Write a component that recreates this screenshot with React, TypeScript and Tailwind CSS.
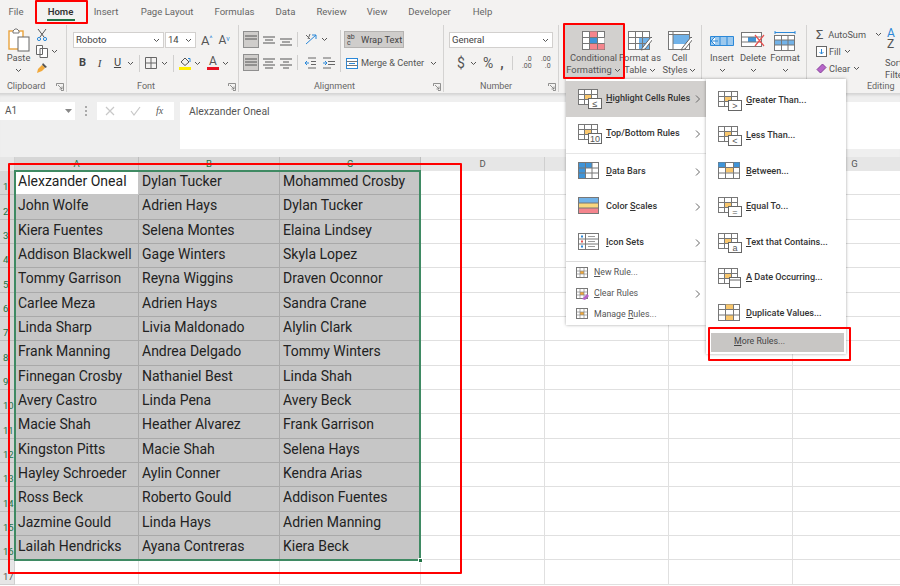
import React from "react";

const ui = { fontFamily: 'Roboto, sans-serif' };
const roboto = { fontFamily: 'Roboto, sans-serif' };

const Chev = ({ className = "" }: { className?: string }) => (
  <svg width="7" height="5" viewBox="0 0 7 5" className={"shrink-0 " + className}><path d="M1 1l2.5 2.5L6 1" fill="none" stroke="#555" strokeWidth="1" /></svg>
);
const Launcher = () => (
  <svg width="8" height="8" viewBox="0 0 8 8"><path d="M.5 3V.5H7.5V7.5H5M2 2l4 4M6 3.5V6H3.5" fill="none" stroke="#777" strokeWidth=".8" /></svg>
);
const Sep = ({ h = "h-[20px]" }: { h?: string }) => <div className={"w-px bg-[#d0cfce] shrink-0 " + h} />;

const Group = ({ w, label, lx, launcher = true, children }: { w: string; label: string; lx: string; launcher?: boolean; children: React.ReactNode }) => (
  <div className={"flex flex-col shrink-0 h-[67px] border-r border-[#d4d3d2] " + w}>
    <div className="h-[56px] flex">{children}</div>
    <div className="h-[11px] flex items-center justify-between">
      <span className={"text-[9px] text-[#666] leading-none whitespace-nowrap " + lx}>{label}</span>
      {launcher && <span className="mr-[2px] flex"><Launcher /></span>}
    </div>
  </div>
);

const Select = ({ w, text }: { w: string; text: string }) => (
  <div className={"h-[16px] bg-white border border-[#d2d0ce] flex items-center justify-between pl-[2px] pr-[3px] shrink-0 " + w}>
    <span className="text-[9.5px] text-[#444] leading-none">{text}</span>
    <Chev />
  </div>
);

const AlignIcon = ({ rows, on }: { rows: [number, number][]; on?: boolean }) => (
  <div className={"w-[16px] h-[17px] flex items-center justify-center " + (on ? "bg-[#cfcdcb] border border-[#8f8f8f]" : "")}>
    <svg width="12" height="12" viewBox="0 0 12 12">
      {rows.map(([y, x], i) => <path key={i} d={`M${x} ${y}H${12 - x}`} stroke="#555" strokeWidth="1" />)}
    </svg>
  </div>
);

const BigTable = ({ children }: { children?: React.ReactNode }) => (
  <svg width="24" height="21" viewBox="0 0 24 21">
    <rect x=".5" y=".5" width="22" height="18" fill="#fff" stroke="#777" />
    {children}
    <path d="M.5 6.5H22.5M.5 12.5H22.5M7.5 .5V18.5M15.5 .5V18.5" stroke="#777" fill="none" />
  </svg>
);

const Big = ({ icon, l1, l2, w, chev2 = true, ml = "" }: { icon: React.ReactNode; l1: string; l2: string; w: string; chev2?: boolean; ml?: string }) => (
  <div className={"flex flex-col items-center pt-[5px] shrink-0 " + w + " " + ml}>
    <div className="h-[22px] flex items-center">{icon}</div>
    <div className="text-[9.3px] leading-[12px] text-[#555] text-center whitespace-nowrap">{l1}</div>
    {l2 ? (
      <div className="text-[9.3px] leading-[12px] text-[#555] flex items-center gap-[2px] whitespace-nowrap">{l2}{chev2 && <Chev />}</div>
    ) : (
      <div className="h-[12px] flex items-center"><Chev /></div>
    )}
  </div>
);

const Tabs = () => {
  const tabs: [string, number, number][] = [
    ["File", 14, 9], ["Home", 27, 24], ["Insert", 24, 20], ["Page Layout", 52, 23], ["Formulas", 39, 22],
    ["Data", 19, 22], ["Review", 29, 22], ["View", 20, 21], ["Developer", 45, 20], ["Help", 19, 21],
  ];
  return (
    <div className="h-[25px] flex items-start">
      {tabs.map(([t, w, m]) => (
        <div key={t} className="h-[25px] flex flex-col items-center shrink-0" style={{ width: w, marginLeft: m }}>
          <div className={"mt-[5px] text-[9.6px] leading-[14px] whitespace-nowrap " + (t === "Home" ? "font-semibold text-[#333]" : "text-[#666]")}>{t}</div>
          {t === "Home" && <div className="w-[28px] h-[2px] bg-[#217346]" />}
        </div>
      ))}
    </div>
  );
};

const Ribbon = () => (
  <div className="h-[68px] flex">
    {/* Clipboard */}
    <Group w="w-[67px]" label="Clipboard" lx="ml-[7px]">
      <div className="w-[36px] flex flex-col items-center pl-[1px] pt-[3px]">
        <svg width="22" height="24" viewBox="0 0 22 24">
          <rect x="1" y="3" width="14" height="18" fill="#fff" stroke="#e8a33d" strokeWidth="1.4" />
          <path d="M5 3l2-2h2l2 2v2H5z" fill="#fff" stroke="#777" />
          <rect x="10" y="9" width="11" height="14" fill="#fff" stroke="#666" />
        </svg>
        <div className="text-[9.3px] leading-[12px] text-[#555]">Paste</div>
        <Chev className="mt-[4px]" />
      </div>
      <div className="flex flex-col pt-[3px] gap-[4px]">
        <svg width="12" height="13" viewBox="0 0 12 13"><path d="M2 1l6 8M10 1L4 9" stroke="#555" fill="none" /><circle cx="3" cy="11" r="1.6" fill="none" stroke="#2b88d8" /><circle cx="9" cy="11" r="1.6" fill="none" stroke="#2b88d8" /></svg>
        <div className="flex items-center gap-[3px]">
          <svg width="12" height="13" viewBox="0 0 12 13"><path d="M.5.5h6v9h-6zM4 3.5h7.5v9H4z" fill="#fff" stroke="#666" /></svg>
          <Chev />
        </div>
        <svg width="12" height="13" viewBox="0 0 12 13"><path d="M7 1l4 4-2 1-3-3z" fill="#555" /><path d="M6 3l3 3-3 3-5 2 1-4z" fill="#f2a93b" /></svg>
      </div>
    </Group>
    {/* Font */}
    <Group w="w-[172px]" label="Font" lx="ml-[70px]">
      <div className="flex flex-col pl-[6px]">
        <div className="flex items-center mt-[7px]">
          <Select w="w-[91px]" text="Roboto" />
          <Select w="w-[31px] ml-[1px]" text="14" />
          <span className="ml-[5px] text-[13px] leading-none text-[#555]">A<sup className="text-[7px] text-[#2b88d8]">^</sup></span>
          <span className="ml-[6px] text-[12px] leading-none text-[#555]">A<sup className="text-[7px] text-[#2b88d8]">v</sup></span>
        </div>
        <div className="flex items-center mt-[7px] h-[16px] text-[11px] text-[#444]">
          <b className="ml-[5px] w-[9px] text-center">B</b>
          <i className="ml-[8px] w-[9px] text-center" style={{ fontFamily: "serif" }}>I</i>
          <u className="ml-[9px] w-[9px] text-center">U</u>
          <Chev className="ml-[5px]" />
          <Sep h="h-[17px] ml-[5px]" />
          <svg className="ml-[5px]" width="12" height="12" viewBox="0 0 12 12"><path d="M.5.5h11v11H.5zM6 .5v11M.5 6h11" fill="none" stroke="#666" /></svg>
          <Chev className="ml-[4px]" />
          <Sep h="h-[17px] ml-[5px]" />
          <svg className="ml-[5px]" width="12" height="14" viewBox="0 0 12 14"><path d="M2 6l4-4 4 4-4 3.5z" fill="none" stroke="#555" /><path d="M9 2.5h2V6" stroke="#2b88d8" fill="none" /><rect x="0" y="11" width="12" height="3" fill="#ffee00" /></svg>
          <Chev className="ml-[3px]" />
          <div className="ml-[6px] w-[12px] flex flex-col items-center">
            <span className="text-[12px] leading-[11px] text-[#555]">A</span>
            <div className="w-[12px] h-[3px] bg-[#e81123]" />
          </div>
          <Chev className="ml-[3px]" />
        </div>
      </div>
    </Group>
    {/* Alignment */}
    <Group w="w-[205px]" label="Alignment" lx="ml-[75px]">
      <div className="flex flex-col pl-[4px] pt-[6px] gap-[6px]">
        <div className="flex items-center gap-px">
          <AlignIcon on rows={[[2, 0], [5, 0], [8, 6]]} />
          <div className="ml-[1px]"><AlignIcon rows={[[3, 0], [6, 2], [9, 0]]} /></div>
          <AlignIcon rows={[[5, 0], [8, 2], [11, 0]]} />
          <Sep h="h-[15px] ml-[2px]" />
          <svg className="ml-[5px]" width="14" height="13" viewBox="0 0 14 13"><path d="M2 11L12 2M8 2h4v4" stroke="#2b88d8" fill="none" /><path d="M2 2l4 4M6 1l-2 5" stroke="#666" fill="none" /></svg>
          <Chev className="ml-[2px]" />
        </div>
        <div className="flex items-center gap-px">
          <AlignIcon on rows={[[2, 0], [5, 0], [8, 0], [11, 6]]} />
          <div className="ml-[1px]"><AlignIcon rows={[[2, 0], [5, 2], [8, 0], [11, 2]]} /></div>
          <AlignIcon rows={[[2, 0], [5, 3], [8, 0], [11, 3]]} />
          <Sep h="h-[15px] ml-[2px]" />
          <svg className="ml-[5px]" width="12" height="12" viewBox="0 0 12 12"><path d="M4 1h8M7 4.5h5M7 7.5h5M4 11h8" stroke="#666" /><path d="M5 6H1M3 4L1 6l2 2" stroke="#2b88d8" fill="none" /></svg>
          <svg className="ml-[6px]" width="12" height="12" viewBox="0 0 12 12"><path d="M0 1h8M5 4.5h7M5 7.5h7M0 11h8" stroke="#666" /><path d="M0 6h4M2 4l2 2-2 2" stroke="#2b88d8" fill="none" /></svg>
        </div>
      </div>
      <div className="ml-[5px] mt-[5px] h-[42px]"><Sep h="h-[42px]" /></div>
      <div className="flex flex-col pl-[3px] pt-[6px]">
        <div className="w-[60px] h-[17px] bg-[#cfcdcb] border border-[#b5b3b1] flex items-center pl-[2px] gap-[2px]">
          <span className="text-[7px] leading-[6px] text-[#444] w-[12px]">ab<br />c</span>
          <span className="text-[9.3px] leading-none text-[#444] whitespace-nowrap">Wrap Text</span>
        </div>
        <div className="mt-[7px] flex items-center pl-[2px] h-[16px]">
          <svg width="12" height="11" viewBox="0 0 12 11"><rect x=".5" y=".5" width="11" height="10" fill="#fff" stroke="#2b88d8" /><path d="M.5 3.5h11M.5 7.5h11" stroke="#777" /><path d="M3 5.5h6" stroke="#2b88d8" /></svg>
          <span className="ml-[3px] text-[9.2px] leading-none text-[#555] whitespace-nowrap">Merge &amp; Center</span>
          <Chev className="ml-[6px]" />
        </div>
      </div>
    </Group>
    {/* Number */}
    <Group w="w-[115px]" label="Number" lx="ml-[36px]">
      <div className="flex flex-col pl-[5px]">
        <div className="mt-[7px]"><Select w="w-[104px]" text="General" /></div>
        <div className="flex items-center mt-[7px] h-[16px] text-[#555]">
          <span className="ml-[8px] text-[14px] leading-none">$</span>
          <Chev className="ml-[5px]" />
          <span className="ml-[6px] text-[14px] leading-none">%</span>
          <b className="ml-[7px] text-[14px] leading-none">,</b>
          <Sep h="h-[14px] ml-[8px]" />
          <span className="ml-[5px] text-[7px] leading-[7px] w-[14px] text-right">.0<br />.00</span>
          <span className="ml-[5px] text-[7px] leading-[7px] w-[14px] text-right">.00<br />.0</span>
        </div>
      </div>
    </Group>
    {/* Styles */}
    <Group w="w-[143px]" label="" lx="" launcher={false}>
      <div className="w-[59px] ml-[5px] h-[53px] bg-[#d2d0ce]">
        <Big w="w-[59px]" l1="Conditional" l2="Formatting" icon={
          <BigTable>
            <rect x="7.5" y=".5" width="8" height="6" fill="#f4858d" /><rect x="15.5" y="6.5" width="7" height="6" fill="#fff" /><rect x="7.5" y="6.5" width="8" height="6" fill="#3f94d8" /><rect x="7.5" y="12.5" width="15" height="6" fill="#f4858d" />
          </BigTable>
        } />
      </div>
      <Big w="w-[34px]" l1="Format as" l2="Table" icon={
        <svg width="24" height="21" viewBox="0 0 24 21"><rect x=".5" y=".5" width="21" height="18" fill="#fff" stroke="#777" /><rect x="11" y="7" width="10" height="11" fill="#71b2e8" /><path d="M.5 6.5h21M.5 12.5h21M7.5.5v18M14.5.5v18" stroke="#777" /><path d="M23 6l-8 10-2 3 4-1 8-10z" fill="#fff" stroke="#666" /></svg>
      } />
      <Big w="w-[45px]" l1="Cell" l2="Styles" icon={
        <svg width="24" height="21" viewBox="0 0 24 21"><rect x=".5" y=".5" width="21" height="18" fill="#fff" stroke="#777" /><rect x="5" y="3" width="16" height="10" fill="#71b2e8" /><path d="M.5 3.5h21M5 .5v18" stroke="#777" /><path d="M23 6l-8 10-2 3 4-1 8-10z" fill="#fff" stroke="#666" /></svg>
      } />
    </Group>
    {/* Cells */}
    <Group w="w-[105px]" label="" lx="" launcher={false}>
      <Big w="w-[34px]" ml="ml-[3px]" l1="Insert" l2="" icon={
        <svg width="24" height="16" viewBox="0 0 24 16"><path d="M.5 3.5h23v9H.5z" fill="#9cc9ee" stroke="#2b88d8" /><path d="M8 8H2M5 4L1 8l4 4" fill="#fff" stroke="#2b88d8" /><path d="M10 3.5v9M17 3.5v9" stroke="#2b88d8" /></svg>
      } />
      <Big w="w-[28px]" l1="Delete" l2="" icon={
        <svg width="24" height="18" viewBox="0 0 24 18"><rect x=".5" y=".5" width="20" height="14" fill="#fff" stroke="#777" /><rect x="7" y="5" width="8" height="5" fill="#3f94d8" /><path d="M.5 5h20M.5 10h20" stroke="#777" /><path d="M14 3l9 11M23 3l-9 11" stroke="#e8504f" strokeWidth="1.2" /></svg>
      } />
      <Big w="w-[36px]" l1="Format" l2="" icon={
        <svg width="22" height="21" viewBox="0 0 22 21"><path d="M1 1.5h20M1 0v3M21 0v3" stroke="#2b88d8" /><rect x=".5" y="4.5" width="20" height="15" fill="#fff" stroke="#777" /><rect x="1" y="9" width="19" height="5" fill="#71b2e8" /><path d="M7.5 4.5v15M14 4.5v15M.5 9h20M.5 14h20" stroke="#777" /></svg>
      } />
    </Group>
    {/* Editing */}
    <div className="flex flex-col flex-1 min-w-0 h-[67px] overflow-hidden">
      <div className="h-[56px] flex">
        <div className="w-[75px] pl-[9px] pt-[1px] shrink-0 text-[9.2px] leading-none text-[#555]">
          <div className="flex items-center h-[17px] whitespace-nowrap">
            <span className="w-[13px] text-[13px]">Σ</span><span>AutoSum</span><Chev className="ml-[9px]" />
          </div>
          <div className="flex items-center h-[17px] whitespace-nowrap">
            <svg className="mr-[2px]" width="11" height="11" viewBox="0 0 11 11"><rect x=".5" y=".5" width="10" height="10" fill="#fff" stroke="#666" /><path d="M5.5 3v5M3.5 6l2 2 2-2" stroke="#2b88d8" fill="none" /></svg>
            <span>Fill</span><Chev className="ml-[3px]" />
          </div>
          <div className="flex items-center h-[17px] whitespace-nowrap">
            <svg className="mr-[2px]" width="11" height="11" viewBox="0 0 11 11"><path d="M1 6.5L6.5 1 10 4.5 4.5 10z" fill="#b665c8" stroke="#86409a" /></svg>
            <span>Clear</span><Chev className="ml-[3px]" />
          </div>
        </div>
        <div className="flex flex-col items-start ml-[3px] pt-[3px] text-[#555] whitespace-nowrap">
          <span className="text-[12px] leading-[11px] text-[#2b88d8] ml-[2px]">A</span>
          <span className="text-[12px] leading-[11px] ml-[2px]">Z</span>
          <span className="text-[9.3px] leading-[12px] mt-[7px]">Sort &amp;</span>
          <span className="text-[9.3px] leading-[12px]">Filter</span>
        </div>
      </div>
      <div className="h-[11px] flex items-center"><span className="ml-[60px] text-[9px] text-[#666] leading-none">Editing</span></div>
    </div>
  </div>
);

const FormulaBar = () => (
  <div className="h-[64px] bg-[#efefef] pt-[9px] shadow-[inset_0_4px_3px_-2px_rgba(0,0,0,0.12)]">
    <div className="flex items-start">
      <div className="w-[75px] h-[18px] bg-white flex items-center justify-between pl-[5px] pr-[3px]">
        <span className="text-[10px] text-[#555] leading-none">A1</span>
        <svg width="7" height="4" viewBox="0 0 7 4"><path d="M0 0h7L3.5 4z" fill="#888" /></svg>
      </div>
      <span className="ml-[10px] w-[3px] h-[10px] mt-[4px] border-l-2 border-dotted border-[#aaa]" />
      <div className="ml-[9px] w-[77px] h-[18px] bg-white flex items-center pl-[8px] gap-[15px]">
        <svg width="10" height="10" viewBox="0 0 10 10"><path d="M1 1l8 8M9 1L1 9" stroke="#c8c8c8" strokeWidth="1.2" /></svg>
        <svg width="11" height="10" viewBox="0 0 11 10"><path d="M1 5l3 4 6-8" stroke="#c8c8c8" strokeWidth="1.2" fill="none" /></svg>
        <span className="text-[10px] italic leading-none text-[#555]" style={{ fontFamily: "serif" }}>fx</span>
      </div>
      <div className="ml-[6px] flex-1 h-[47px] bg-white pl-[9px] pt-[3px] text-[10.4px] leading-[14px] text-[#555]">Alexzander Oneal</div>
    </div>
  </div>
);

const cols = [124, 141, 141, 124, 124, 124, 124];
const colNames = ["A", "B", "C", "D", "E", "F", "G"];
const data = [
  ["Alexzander Oneal", "Dylan Tucker", "Mohammed Crosby"], ["John Wolfe", "Adrien Hays", "Dylan Tucker"],
  ["Kiera Fuentes", "Selena Montes", "Elaina Lindsey"], ["Addison Blackwell", "Gage Winters", "Skyla Lopez"],
  ["Tommy Garrison", "Reyna Wiggins", "Draven Oconnor"], ["Carlee Meza", "Adrien Hays", "Sandra Crane"],
  ["Linda Sharp", "Livia Maldonado", "Alylin Clark"], ["Frank Manning", "Andrea Delgado", "Tommy Winters"],
  ["Finnegan Crosby", "Nathaniel Best", "Linda Shah"], ["Avery Castro", "Linda Pena", "Avery Beck"],
  ["Macie Shah", "Heather Alvarez", "Frank Garrison"], ["Kingston Pitts", "Macie Shah", "Selena Hays"],
  ["Hayley Schroeder", "Aylin Conner", "Kendra Arias"], ["Ross Beck", "Roberto Gould", "Addison Fuentes"],
  ["Jazmine Gould", "Linda Hays", "Adrien Manning"], ["Lailah Hendricks", "Ayana Contreras", "Kiera Beck"],
  ["", "", ""],
];

const Sheet = () => (
  <div className="relative bg-white">
    <div className="flex h-[14px]">
      <div className="w-[15px] shrink-0 bg-[#e6e6e6] border-r border-[#d0d0d0]" />
      {cols.map((w, i) => (
        <div key={i} style={{ width: w }} className={"shrink-0 flex items-center justify-center text-[9.5px] leading-none border-r " + (i < 3 ? "bg-[#d6d6d6] text-[#217346] border-[#bdbdbd]" : "bg-[#e6e6e6] text-[#555] border-[#cfcfcf]")}>{colNames[i]}</div>
      ))}
    </div>
    {data.map((r, ri) => (
      <div key={ri} className="flex h-[24.33px]">
        <div className={"w-[15px] shrink-0 flex items-end justify-start pl-[3px] pb-[1px] text-[9.5px] leading-[12px] border-r border-b " + (ri < 16 ? "bg-[#d6d6d6] text-[#217346] border-[#bdbdbd]" : "bg-[#e6e6e6] text-[#555] border-[#cfcfcf]")}>{ri + 1}</div>
        {cols.map((w, ci) => {
          const sel = ci < 3 && ri < 16;
          const first = ci === 0 && ri === 0;
          return (
            <div key={ci} style={{ width: w, ...roboto }} className={"shrink-0 pl-[3px] border-r border-b text-[14px] leading-[20px] text-[#222] whitespace-nowrap overflow-hidden " + (first ? "bg-white border-[#c6c6c6]" : sel ? "bg-[#c6c6c6] border-[#a9a9a9]" : "bg-white border-[#e0e0e0]")}>
              {ci < 3 ? r[ci] : ""}
            </div>
          );
        })}
      </div>
    ))}
    {/* selection outline */}
    <div className="absolute left-[14px] top-[13px] w-[407px] h-[391px] border-2 border-[#3f8a63] pointer-events-none" />
    <div className="absolute left-[418px] top-[401px] w-[5px] h-[5px] bg-[#217346] border border-white pointer-events-none" />
  </div>
);

const Rule = ({ sym, kind = "box" }: { sym?: string; kind?: string }) => (
  <svg width="24" height="20" viewBox="0 0 24 20">
    <rect x=".5" y=".5" width="19" height="15" fill="#fff" stroke="#777" />
    <rect x="6.5" y="5.5" width="7" height="5" fill="#f9c76d" />
    <path d="M.5 5.5h19M.5 10.5h19M6.5.5v15M13.5.5v15" stroke="#777" />
    {kind === "box" && <><rect x="10.5" y="9.5" width="13" height="10" fill="#fff" stroke="#666" /><text x="17" y="17.5" textAnchor="middle" fontSize="9" fill="#555" fontFamily="Liberation Sans">{sym}</text></>}
    {kind === "date" && <><rect x="11.5" y="9.5" width="11" height="10" fill="#fff" stroke="#666" /><path d="M11.5 12h11" stroke="#666" /></>}
  </svg>
);

const RuleBars = ({ dup }: { dup?: boolean }) => (
  <svg width="24" height="20" viewBox="0 0 24 20">
    <rect x=".5" y=".5" width="21" height="16" fill="#fff" stroke="#777" />
    <rect x="7.5" y={dup ? ".5" : "5.5"} width="8" height="5" fill="#f9c76d" />
    {dup ? <rect x="7.5" y="11" width="8" height="5" fill="#f9c76d" /> : <><rect x=".5" y=".5" width="7" height="5" fill="#3f94d8" /><rect x="15.5" y=".5" width="6" height="5" fill="#3f94d8" /></>}
    <path d="M.5 5.5h21M.5 11h21M7.5.5v16M15.5.5v16" stroke="#777" />
  </svg>
);

const L = ({ u, t, pre = "" }: { u: string; t: string; pre?: string }) => <>{pre}<u>{u}</u>{t}</>;

const MainItem = ({ icon, label, on }: { icon: React.ReactNode; label: React.ReactNode; on?: boolean }) => (
  <div className={"h-[35.5px] flex items-center pl-[12px] pr-[6px] " + (on ? "bg-[#d2d0ce]" : "")}>
    <div className="w-[28px] flex shrink-0">{icon}</div>
    <span className="text-[9.1px] font-medium text-[#333] whitespace-nowrap flex-1">{label}</span>
    <svg width="5" height="8" viewBox="0 0 5 8"><path d="M1 .5L4.5 4 1 7.5" fill="none" stroke="#666" /></svg>
  </div>
);
const SmallItem = ({ icon, label, chev }: { icon: React.ReactNode; label: React.ReactNode; chev?: boolean }) => (
  <div className="h-[20.7px] flex items-center pl-[10px] pr-[6px]">
    <div className="w-[18px] flex shrink-0">{icon}</div>
    <span className="text-[8.8px] text-[#555] whitespace-nowrap flex-1">{label}</span>
    {chev && <svg width="5" height="8" viewBox="0 0 5 8"><path d="M1 .5L4.5 4 1 7.5" fill="none" stroke="#666" /></svg>}
  </div>
);
const SubItem = ({ icon, label }: { icon: React.ReactNode; label: React.ReactNode }) => (
  <div className="h-[35.5px] flex items-center pl-[12px]">
    <div className="w-[28px] flex shrink-0">{icon}</div>
    <span className="text-[9.1px] font-medium text-[#333] whitespace-nowrap">{label}</span>
  </div>
);
const Small = ({ variant }: { variant: number }) => (
  <svg width="13" height="12" viewBox="0 0 13 12">
    <rect x=".5" y=".5" width="11" height="10" fill="#fff" stroke="#777" />
    <rect x="4" y="4" width="4" height="3" fill="#f2a93b" />
    <path d="M.5 4h11M.5 7h11M4 .5v10M8 .5v10" stroke="#888" strokeWidth=".7" />
    {variant === 1 && <path d="M6 11l5-5 2 2-4 4z" fill="#b665c8" />}
  </svg>
);

const Menus = () => (
  <>
    <div className="absolute left-[566px] top-[79px] w-[140px] h-[246px] bg-white shadow-[0_0_3px_rgba(0,0,0,0.35)] pt-[2px]" style={ui}>
      <MainItem on label={<L u="H" t="ighlight Cells Rules" />} icon={<Rule sym="≤" />} />
      <MainItem label={<L u="T" t="op/Bottom Rules" />} icon={<Rule sym="10" />} />
      <div className="h-[2px] border-b border-[#e6e6e6]" />
      <MainItem label={<L u="D" t="ata Bars" />} icon={
        <svg width="24" height="20" viewBox="0 0 24 20"><rect x=".5" y=".5" width="20" height="16" fill="#fff" stroke="#777" /><rect x="1" y="1" width="13" height="5" fill="#3f94d8" /><rect x="1" y="6" width="7" height="10" fill="#3f94d8" /><path d="M.5 6h20M.5 11h20M7.5.5v16M14 .5v16" stroke="#777" /></svg>
      } />
      <MainItem label={<L pre="Color " u="S" t="cales" />} icon={
        <svg width="24" height="20" viewBox="0 0 24 20"><rect x=".5" y=".5" width="20" height="16" fill="#fff" stroke="#777" /><rect x="1" y="1" width="19" height="5" fill="#71b2e8" /><rect x="1" y="6" width="19" height="5" fill="#f9d77e" /><rect x="1" y="11" width="19" height="5" fill="#f4858d" /><path d="M.5 6h20M.5 11h20" stroke="#777" /></svg>
      } />
      <MainItem label={<L u="I" t="con Sets" />} icon={
        <svg width="24" height="20" viewBox="0 0 24 20"><rect x=".5" y=".5" width="20" height="16" fill="#fff" stroke="#777" /><path d="M.5 6h20M.5 11h20M7.5.5v16" stroke="#777" /><path d="M10 3.5h7M10 8.5h7M10 13.5h7" stroke="#999" /><rect x="3" y="2.5" width="2" height="2" fill="#2b88d8" /><rect x="3" y="7.5" width="2" height="2" fill="#e8504f" /><rect x="3" y="12.5" width="2" height="2" fill="#2b88d8" /></svg>
      } />
      <div className="h-px bg-[#dcdcdc]" />
      <div className="pt-[1px]">
        <SmallItem label={<L u="N" t="ew Rule..." />} icon={<Small variant={0} />} />
        <SmallItem chev label={<L u="C" t="lear Rules" />} icon={<Small variant={1} />} />
        <SmallItem label={<L pre="Manage " u="R" t="ules..." />} icon={<Small variant={2} />} />
      </div>
    </div>
    <div className="absolute left-[706px] top-[79px] w-[140px] h-[275px] bg-white shadow-[0_0_3px_rgba(0,0,0,0.35)] pt-[4px]" style={ui}>
      <SubItem label={<L u="G" t="reater Than..." />} icon={<Rule sym=">" />} />
      <SubItem label={<L u="L" t="ess Than..." />} icon={<Rule sym="<" />} />
      <SubItem label={<L u="B" t="etween..." />} icon={<RuleBars />} />
      <SubItem label={<L u="E" t="qual To..." />} icon={<Rule sym="=" />} />
      <SubItem label={<L u="T" t="ext that Contains..." />} icon={<Rule sym="a" />} />
      <SubItem label={<L u="A" t=" Date Occurring..." />} icon={<Rule kind="date" />} />
      <SubItem label={<L u="D" t="uplicate Values..." />} icon={<RuleBars dup />} />
      <div className="ml-[5px] mr-[2px] mt-[1px] h-[19px] bg-[#c8c6c4] flex items-center pl-[23px] text-[8.8px] text-[#444]"><span><u>M</u>ore Rules...</span></div>
    </div>
  </>
);

const RedBox = ({ className }: { className: string }) => (
  <div className={"absolute border-2 border-[#ff0000] rounded-[1px] pointer-events-none " + className} />
);

export default function App() {
  return (
    <div className="relative w-[900px] h-[586px] overflow-hidden bg-white" style={ui}>
      <div className="bg-[#f3f2f1]">
        <Tabs />
        <Ribbon />
      </div>
      <FormulaBar />
      <Sheet />
      <Menus />
      <RedBox className="left-[35px] top-0 w-[53px] h-[24px]" />
      <RedBox className="left-[563px] top-[23px] w-[62px] h-[56px]" />
      <RedBox className="left-[708px] top-[327px] w-[143px] h-[34px]" />
      <RedBox className="left-[8px] top-[163px] w-[454px] h-[411px]" />
    </div>
  );
}
